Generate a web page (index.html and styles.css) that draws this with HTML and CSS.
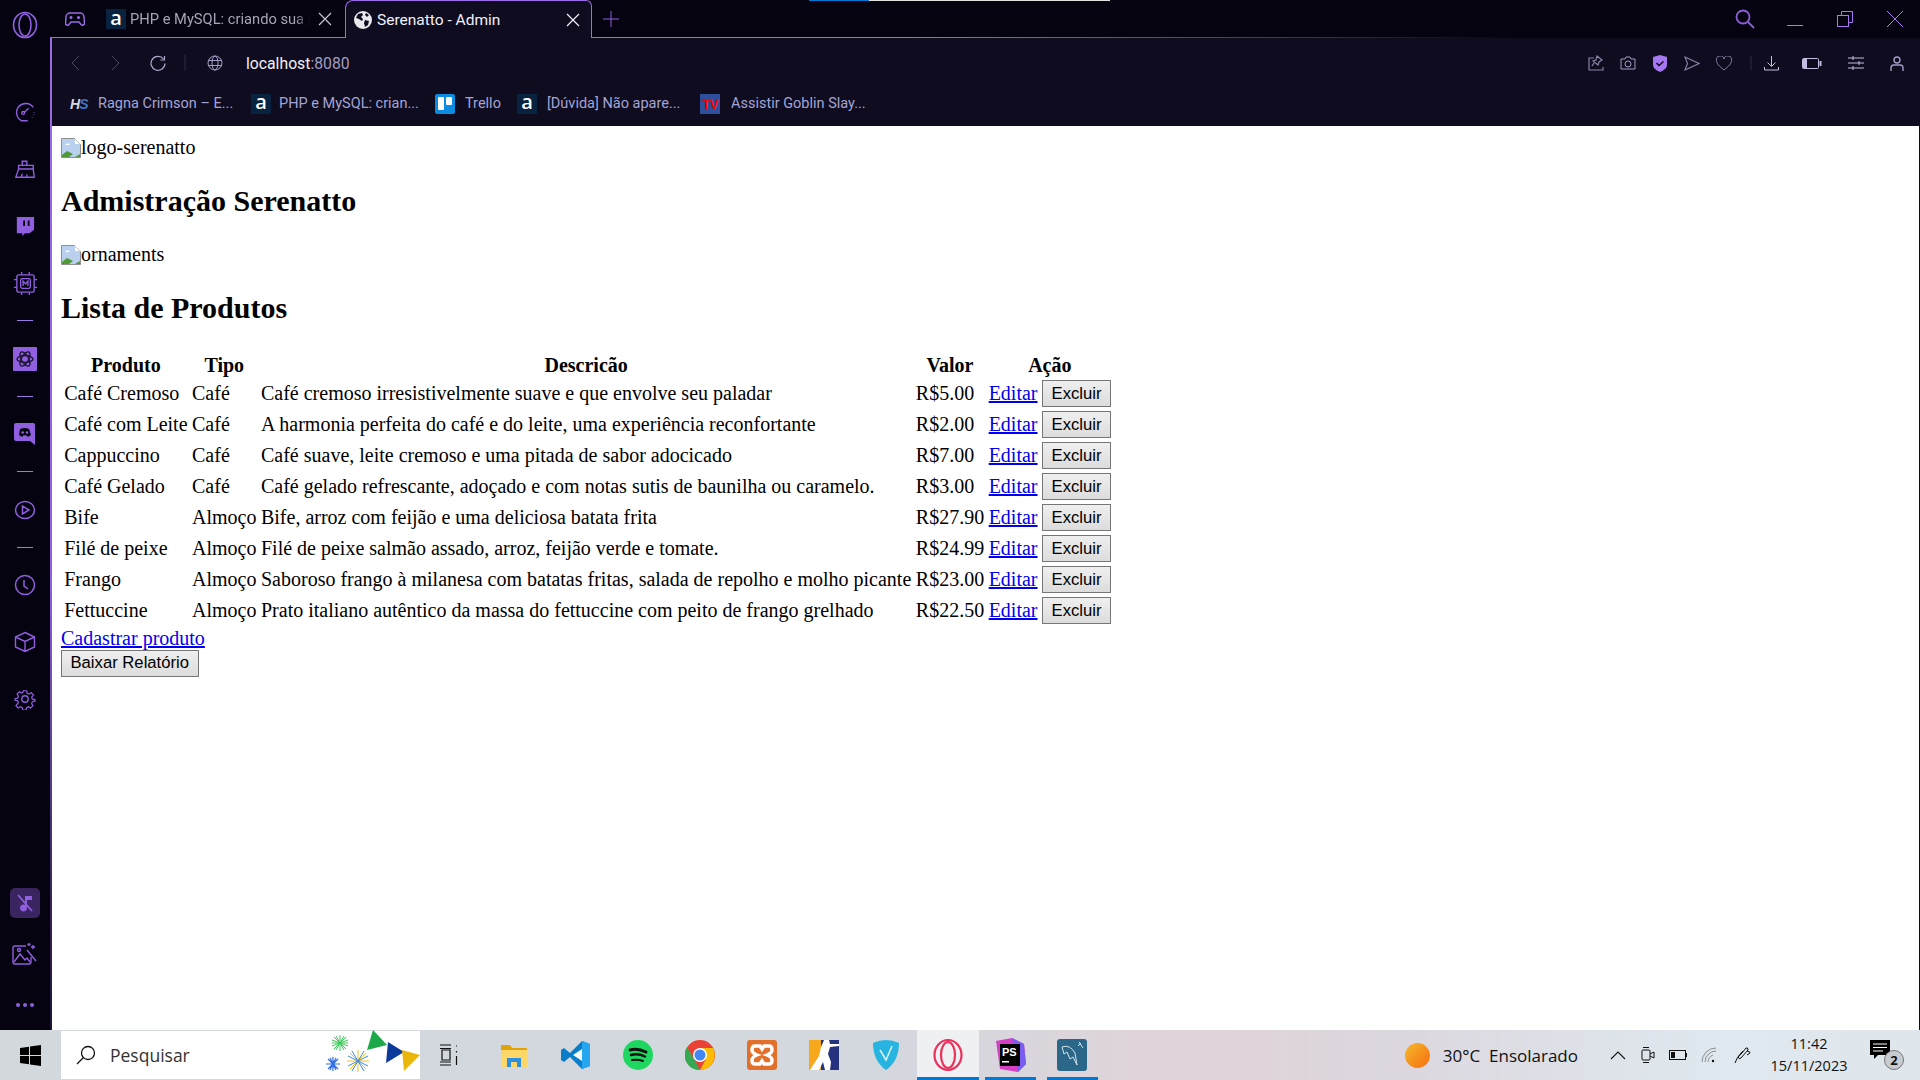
FILE: index.html
```html
<!DOCTYPE html>
<html lang="pt-BR">
<head>
<meta charset="utf-8">
<title>Serenatto - Admin</title>
<link rel="stylesheet" href="styles.css">
</head>
<body>
<div class="screen">
  <div class="capture-bar"><span class="capture-blue"></span><span class="capture-white"></span></div>
  <div class="window">
    <aside class="rail">
      <div class="rail-cell rail-logo"><svg width="26" height="30" viewBox="0 0 26 30" fill="none" stroke="currentColor" stroke-width="1.6"><ellipse cx="13" cy="15" rx="11.5" ry="12.5"/><ellipse cx="13" cy="15" rx="6" ry="11"/></svg></div>
      <div class="rail-cell"><svg width="22" height="22" viewBox="0 0 24 24" fill="none" stroke="currentColor" stroke-width="1.5"><path d="M21 7A10 10 0 1 0 8 21.5h7"/><path d="M22 12v.5M21.500 15v.5M20 18v.5"/><circle cx="10" cy="13" r="1.600"/><path d="M11.500 12 16 8"/></svg></div>
      <div class="rail-cell"><svg width="22" height="22" viewBox="0 0 24 24" fill="none" stroke="currentColor" stroke-width="1.500"><path d="M9 8V3.500h5V8M5 8h16v4l1 9H2l3-9zM5 12h16M8 21l1-4M14 21v-3"/></svg></div>
      <div class="rail-cell"><svg width="20" height="22" viewBox="0 0 22 24" fill="currentColor"><path fill-rule="evenodd" d="M2 2h19v14l-5 4h-5l-3 3v-3H2zM9 6v6h2V6zm5 0v6h2V6z"/></svg></div>
      <div class="rail-cell"><svg width="25" height="25" viewBox="0 0 26 26" fill="none" stroke="currentColor" stroke-width="1.400"><rect x="4" y="4" width="18" height="18" rx="2"/><rect x="8" y="8" width="10" height="10" rx="1.500"/><path d="M10.500 15.500v-5l2.500 3 2.500-3v5M9 1v3M17 1v3M9 22v3M17 22v3M1 9h3M1 17h3M22 9h3M22 17h3"/></svg></div>
      <div class="rail-sep"></div>
      <div class="rail-cell"><span class="rail-tile"><svg width="18" height="18" viewBox="0 0 18 18" fill="none" stroke="#1d1433" stroke-width="1.400"><ellipse cx="9" cy="9" rx="8" ry="3.500"/><ellipse cx="9" cy="9" rx="8" ry="3.500" transform="rotate(60 9 9)"/><ellipse cx="9" cy="9" rx="8" ry="3.500" transform="rotate(120 9 9)"/></svg></span></div>
      <div class="rail-sep"></div>
      <div class="rail-cell"><svg width="24" height="24" viewBox="0 0 24 24"><path fill="currentColor" d="M3 1h17a2 2 0 0 1 2 2v20l-5-4H3a2 2 0 0 1-2-2V3a2 2 0 0 1 2-2z"/><path fill="#05030f" d="M7 7q5-2 9 0l2 6q-2 2-4 1.500l-.6-1.300h-3L9.800 14.500Q8 15 6 13z"/><circle cx="9.700" cy="10.500" r="1.300" fill="currentColor"/><circle cx="14" cy="10.500" r="1.300" fill="currentColor"/></svg></div>
      <div class="rail-sep"></div>
      <div class="rail-cell"><svg width="22" height="20" viewBox="0 0 22 20" fill="none" stroke="currentColor" stroke-width="1.500"><ellipse cx="11" cy="10" rx="9.500" ry="8.500"/><path d="M8.500 6v8l6.500-4z"/></svg></div>
      <div class="rail-sep"></div>
      <div class="rail-cell"><svg width="22" height="22" viewBox="0 0 22 22" fill="none" stroke="currentColor" stroke-width="1.500"><circle cx="11" cy="11" r="9.500"/><path d="M10 6v6l4 3"/></svg></div>
      <div class="rail-cell"><svg width="22" height="22" viewBox="0 0 22 22" fill="none" stroke="currentColor" stroke-width="1.400"><path d="M11 1.500 20.500 6v10L11 20.500 1.500 16V6zM1.500 6 11 10.500 20.500 6M11 10.500v10"/></svg></div>
      <div class="rail-cell"><svg width="22" height="22" viewBox="0 0 24 24" fill="none" stroke="currentColor" stroke-width="1.500"><circle cx="12" cy="12" r="3.500"/><path d="M10 2h4l.6 3 2.300 1 2.600-1.600 2.800 2.800L20 9.800l1 2.300 3 .6v2l-3 .6-1 2.300 1.600 2.600-2.800 2.800-2.600-1.600-2.300 1-.6 3h-4l-.6-3-2.300-1-2.600 1.600-2.800-2.800L4 16.500l-1-2.300-3-.6v-2l3-.6 1-2.300-1.600-2.600L5.200 3.300l2.600 1.600 1.600-.9z" transform="translate(1.200 1.200) scale(.9)"/></svg></div>
      <div class="rail-bottom">
        <div class="rail-low"><span class="rail-tile-dim"><svg width="20" height="20" viewBox="0 0 20 20" fill="currentColor"><path d="M10 3h7v4h-5v8a3.500 3.500 0 1 1-2-3.200z"/><path d="M3 2l14 16" stroke="currentColor" stroke-width="1.800"/></svg></span></div>
        <div class="rail-low"><svg width="26" height="24" viewBox="0 0 26 24" fill="none" stroke="currentColor" stroke-width="1.400"><path d="M14 4H3a2 2 0 0 0-2 2v14a2 2 0 0 0 2 2h14a2 2 0 0 0 2-2v-5"/><path d="m2 20 6-8 5 6 2-2 3 4"/><circle cx="7" cy="8" r="1.500"/><path d="m15 8 9 11M21 3v4M19 5h4M17 1v3M15.500 2.500h3"/></svg></div>
        <div class="rail-low rail-dots"><i></i><i></i><i></i></div>
      </div>
    </aside>
    <div class="browser">
      <header class="tabbar">
        <span class="game"><svg width="20" height="16" viewBox="0 0 20 16" fill="none" stroke="currentColor" stroke-width="1.500"><path d="M5 2h10a4 4 0 0 1 4 4l.5 6a2 2 0 0 1-3.500 1.500L14 11H6l-2 2.500A2 2 0 0 1 .5 12L1 6a4 4 0 0 1 4-4z"/><path d="M6 5v3M4.500 6.500h3"/><circle cx="13.500" cy="6.500" r=".8"/></svg></span>
        <div class="tab">
          <span class="fav-a">a</span>
          <span class="tab-title tab-title-fade">PHP e MySQL: criando sua p</span>
          <svg class="tab-x" width="14" height="14" viewBox="0 0 14 14" stroke="currentColor" stroke-width="1.200"><path d="m1 1 12 12M13 1 1 13"/></svg>
        </div>
        <div class="tab tab-active">
          <svg width="18" height="18" viewBox="0 0 18 18"><circle cx="9" cy="9" r="9" fill="#e8e8ee"/><path fill="#0e0c1e" d="M4 3l4-1 1 2-2 2 2 2-1 2-3-2-3-1zM11 9l4 1-1 4-3 2-1-4zM12 2l3 2-2 2-2-2z"/></svg>
          <span class="tab-title tab-title-active">Serenatto - Admin</span>
          <svg class="tab-x" width="14" height="14" viewBox="0 0 14 14" stroke="currentColor" stroke-width="1.200"><path d="m1 1 12 12M13 1 1 13"/></svg>
        </div>
        <svg class="plus" width="16" height="16" viewBox="0 0 16 16" stroke="currentColor" stroke-width="1"><path d="M8 0v16M0 8h16"/></svg>
        <div class="win-controls">
          <svg width="20" height="20" viewBox="0 0 20 20" fill="none" stroke="#8b5fd8" stroke-width="1.800"><circle cx="8" cy="8" r="6.500"/><path d="m13 13 6 6"/></svg>
          <svg class="ctl-min" width="16" height="16" viewBox="0 0 16 16" stroke="currentColor" stroke-width="1"><path d="M0 14.500h16"/></svg>
          <svg width="16" height="16" viewBox="0 0 16 16" fill="none" stroke="currentColor" stroke-width="1"><rect x=".500" y="4.500" width="11" height="11"/><path d="M4.500 4.500v-4h11v11h-4"/></svg>
          <svg width="16" height="16" viewBox="0 0 16 16" stroke="currentColor" stroke-width="1"><path d="m0 0 16 16M16 0 0 16"/></svg>
        </div>
      </header>
      <div class="viewport">
        <nav class="toolbar">
          <svg class="nav-dim" width="10" height="16" viewBox="0 0 10 16" fill="none" stroke="currentColor"><path d="M9 1 2 8l7 7"/></svg>
          <svg class="nav-dim" width="10" height="16" viewBox="0 0 10 16" fill="none" stroke="currentColor"><path d="m1 1 7 7-7 7"/></svg>
          <svg class="nav-reload" width="16" height="16" viewBox="0 0 16 16" fill="none" stroke="currentColor" stroke-width="1.200"><path d="M13.500 4A7 7 0 1 0 15 8.500"/><path d="M14.500 1v4h-4"/></svg>
          <span class="nav-div"></span>
          <svg class="nav-globe" width="16" height="16" viewBox="0 0 16 16" fill="none" stroke="currentColor"><circle cx="8" cy="8" r="7"/><ellipse cx="8" cy="8" rx="3" ry="7"/><path d="M1 5.500h14M1 10.500h14"/></svg>
          <span class="url">localhost<span class="url-port">:8080</span></span>
          <div class="tools">
            <svg width="16" height="16" viewBox="0 0 16 16" fill="none" stroke="#8a82a8" stroke-width="1.200"><path d="M6 3H1v12h14v-3"/><path d="m9 1 5 4-3 2-1 3-5-4 3-1zM6 8l-2 3"/></svg>
            <svg width="16" height="14" viewBox="0 0 16 14" fill="none" stroke="#a49cc4" stroke-width="1"><path d="M1 3h4l1-2h4l1 2h4v10H1z"/><circle cx="8" cy="8" r="3"/></svg>
            <svg width="14" height="17" viewBox="0 0 14 17"><path fill="#a678f2" d="M7 0l7 2v8q0 4-7 7-7-3-7-7V2z"/><path fill="none" stroke="#100c20" stroke-width="1.500" d="m3.500 8 2.500 2.500 4.500-4"/></svg>
            <svg class="tool-send" width="16" height="15" viewBox="0 0 16 15" fill="none" stroke="#8a82a8" stroke-width="1.100"><path d="M1 1l14 6.500L1 14l2.500-6.500z"/></svg>
            <svg width="16" height="15" viewBox="0 0 16 15" fill="none" stroke="#8a82a8" stroke-width="1"><path d="M8 14C3 10 .5 7.500.5 4.500A3.800 3.800 0 0 1 8 3a3.800 3.800 0 0 1 7.500 1.500C15.500 7.500 13 10 8 14z"/></svg>
            <span class="tool-div"></span>
            <svg class="tool-dl" width="15" height="15" viewBox="0 0 15 15" fill="none" stroke="#c4bce0" stroke-width="1"><path d="M7.500 0v10M3.500 6.500l4 4 4-4M.500 11v3h14v-3"/></svg>
            <svg class="tool-bat" width="20" height="11" viewBox="0 0 20 11"><rect x=".500" y=".500" width="16" height="10" rx="1" fill="none" stroke="#c4bce0"/><rect x="1" y="1" width="4" height="9" fill="#c4bce0"/><rect x="17.500" y="3" width="2" height="5" fill="#c4bce0"/></svg>
            <svg class="tool-sl" width="16" height="14" viewBox="0 0 16 14" stroke="#c4bce0" stroke-width="1"><path d="M0 2h16M0 7h16M0 12h16M5 0v4M11 5v4M5 10v4"/></svg>
            <svg class="tool-user" width="14" height="15" viewBox="0 0 14 15" fill="none" stroke="#a49cc4" stroke-width="1.400"><circle cx="7" cy="4" r="3"/><path d="M1 15v-3q0-3 3-3h6q3 0 3 3v3"/></svg>
          </div>
        </nav>
        <div class="bookmarks">
          <div class="bm bm-hs"><span class="fav-hs">H<span class="fav-hs-s">S</span></span><span class="bm-text">Ragna Crimson – E...</span></div>
          <div class="bm bm-php"><span class="fav-a">a</span><span class="bm-text">PHP e MySQL: crian...</span></div>
          <div class="bm bm-trello"><svg width="20" height="20" viewBox="0 0 20 20"><rect width="20" height="20" rx="2" fill="#0c8ce0"/><rect x="3" y="3" width="6" height="13" rx="1" fill="#fff"/><rect x="11" y="3" width="6" height="8" rx="1" fill="#fff"/></svg><span class="bm-text">Trello</span></div>
          <div class="bm bm-duv"><span class="fav-a">a</span><span class="bm-text">[Dúvida] Não apare...</span></div>
          <div class="bm bm-tv"><span class="fav-tv">TV</span><span class="bm-text">Assistir Goblin Slay...</span></div>
        </div>
        <main class="page">
          <div class="alt-line"><svg class="broken" width="20" height="20" viewBox="0 0 20 20"><path fill="#b9d0ee" stroke="#8f8f8f" d="M.5.5h13l6 6v13H.5z"/><path fill="#fff" d="M4 7q2.500-3.500 5 0zM14 1v5h5z"/><path fill="#4f9a36" d="M1 19v-2l5-4 6 3-4 3zM14 19l5-3v3z"/></svg>logo-serenatto</div>
          <h1 class="heading">Admistração Serenatto</h1>
          <div class="alt-line"><svg class="broken" width="20" height="20" viewBox="0 0 20 20"><path fill="#b9d0ee" stroke="#8f8f8f" d="M.5.5h13l6 6v13H.5z"/><path fill="#fff" d="M4 7q2.500-3.500 5 0zM14 1v5h5z"/><path fill="#4f9a36" d="M1 19v-2l5-4 6 3-4 3zM14 19l5-3v3z"/></svg>ornaments</div>
          <h2 class="heading">Lista de Produtos</h2>
          <table class="products">
            <thead><tr><th>Produto</th><th>Tipo</th><th>Descricão</th><th>Valor</th><th colspan="2">Ação</th></tr></thead>
            <tbody>
              <tr><td>Café Cremoso</td><td>Café</td><td>Café cremoso irresistivelmente suave e que envolve seu paladar</td><td>R$5.00</td><td><a href="#">Editar</a></td><td><button class="btn" type="button">Excluir</button></td></tr>
              <tr><td>Café com Leite</td><td>Café</td><td>A harmonia perfeita do café e do leite, uma experiência reconfortante</td><td>R$2.00</td><td><a href="#">Editar</a></td><td><button class="btn" type="button">Excluir</button></td></tr>
              <tr><td>Cappuccino</td><td>Café</td><td>Café suave, leite cremoso e uma pitada de sabor adocicado</td><td>R$7.00</td><td><a href="#">Editar</a></td><td><button class="btn" type="button">Excluir</button></td></tr>
              <tr><td>Café Gelado</td><td>Café</td><td>Café gelado refrescante, adoçado e com notas sutis de baunilha ou caramelo.</td><td>R$3.00</td><td><a href="#">Editar</a></td><td><button class="btn" type="button">Excluir</button></td></tr>
              <tr><td>Bife</td><td>Almoço</td><td>Bife, arroz com feijão e uma deliciosa batata frita</td><td>R$27.90</td><td><a href="#">Editar</a></td><td><button class="btn" type="button">Excluir</button></td></tr>
              <tr><td>Filé de peixe</td><td>Almoço</td><td>Filé de peixe salmão assado, arroz, feijão verde e tomate.</td><td>R$24.99</td><td><a href="#">Editar</a></td><td><button class="btn" type="button">Excluir</button></td></tr>
              <tr><td>Frango</td><td>Almoço</td><td>Saboroso frango à milanesa com batatas fritas, salada de repolho e molho picante</td><td>R$23.00</td><td><a href="#">Editar</a></td><td><button class="btn" type="button">Excluir</button></td></tr>
              <tr><td>Fettuccine</td><td>Almoço</td><td>Prato italiano autêntico da massa do fettuccine com peito de frango grelhado</td><td>R$22.50</td><td><a href="#">Editar</a></td><td><button class="btn" type="button">Excluir</button></td></tr>
            </tbody>
          </table>
          <a href="#">Cadastrar produto</a>
          <div><button class="btn" type="button">Baixar Relatório</button></div>
        </main>
      </div>
    </div>
  </div>
  <footer class="taskbar">
    <span class="start"><svg width="21" height="21" viewBox="0 0 21 21" fill="#000"><path d="M0 3l9-1.300V10H0zM10 1.500 21 0v10H10zM0 11h9v8.300L0 18zM10 11h11v10l-11-1.500z"/></svg></span>
    <div class="search">
      <svg width="20" height="20" viewBox="0 0 20 20" fill="none" stroke="#111" stroke-width="1.300"><circle cx="12" cy="8" r="6.500"/><path d="M7.500 12.500 1 19"/></svg>
      <span class="search-text">Pesquisar</span>
      <svg class="festive" width="96" height="50" viewBox="0 0 96 50" fill="none">
        <g stroke="#3ec85a" stroke-width="1"><path d="M16 5v16M8 13h16M10 7l12 12M22 7 10 19M12 6l8 14M20 6l-8 14M8 10l16 6M24 10 8 16"/></g>
        <g stroke="#2f6fe8" stroke-width="1.200"><path d="M9 27v14M2 34h14M4 29l10 10M14 29 4 39M6 28l6 12M12 28l-6 12"/></g>
        <g stroke="#f0c020" stroke-width="1"><path d="M34 20v22M23 31h22M26 23l16 16M42 23 26 39"/></g>
        <g stroke="#3a8be0" stroke-width="1"><path d="M28 21l12 20M40 21 28 41M24 26l20 10M44 26 24 36"/></g>
        <path fill="#1da84a" d="M49 0 63 15 43 20z"/>
        <path fill="#0c3a9a" d="M64 12 80 22 62 33z"/>
        <path fill="#eab60a" d="M78 20 96 25 80 41z"/>
      </svg>
    </div>
    <div class="task-icons">
      <span class="task-icon task-view"><svg width="20" height="22" viewBox="0 0 20 22" fill="none" stroke="#111" stroke-width="1.200"><path d="M1 1h11M1 21h11M1 4.500h11M3 6h8v10H3zM1 18h11M17 2h1M17.500 7v1.500M17.500 12v9"/></svg></span>
      <span class="task-icon"><svg width="26" height="24" viewBox="0 0 26 24"><path fill="#e0a10c" d="M0 2h9l2 3h15v5H0z"/><path fill="#fdd868" d="M0 7h26v17H0z"/><path fill="#2d8fe0" d="M6 24v-9h14v9h-4v-5h-6v5z"/></svg></span>
      <span class="task-icon"><svg width="30" height="30" viewBox="0 0 30 30"><path fill="#0a7dc8" d="M21 1 9 13 3 8 0 10v10l3 2 6-5 12 12 8-3V4z"/><path fill="#24a6f0" d="M21 1l8 3v22l-8 3z"/><path fill="#f4fbff" d="M21 9l-9 6 9 6z"/></svg></span>
      <span class="task-icon"><svg width="30" height="30" viewBox="0 0 30 30" fill="none"><circle cx="15" cy="15" r="15" fill="#1ed760"/><path stroke="#111" stroke-width="3" stroke-linecap="round" d="M7 10q8-2 16 2"/><path stroke="#111" stroke-width="2.500" stroke-linecap="round" d="M8 15q7-2 14 1.500"/><path stroke="#111" stroke-width="2" stroke-linecap="round" d="M9 20q6-1 11 1"/></svg></span>
      <span class="task-icon"><svg width="30" height="30" viewBox="0 0 30 30"><circle cx="15" cy="15" r="15" fill="#ea4335"/><path fill="#fbbc05" d="M15 8h13a15 15 0 0 1-13 22l6-11z"/><path fill="#34a853" d="M2 7l7 12 6 11A15 15 0 0 1 2 7z"/><circle cx="15" cy="15" r="7" fill="#fff"/><circle cx="15" cy="15" r="5.500" fill="#4285f4"/></svg></span>
      <span class="task-icon"><svg width="30" height="30" viewBox="0 0 30 30"><rect width="30" height="30" rx="3" fill="#e2702a"/><path fill="none" stroke="#fff" stroke-width="3.500" d="M8 6h5l2 3 2-3h5q3 0 3 4 0 3-5 5 5 2 5 5 0 4-3 4h-5l-2-3-2 3H8q-3 0-3-4 0-3 5-5-5-2-5-5 0-4 3-4z"/></svg></span>
      <span class="task-icon"><svg width="30" height="30" viewBox="0 0 30 30"><rect width="30" height="30" fill="#24327f"/><path fill="#f8a81c" d="M0 0h12v30H0z"/><path fill="#fff" d="M15 0h5l1 4 9 0v2l-9 1-2 7 3 8-1 8h-5l-2-8-4 8H1l9-14 2-9z"/></svg></span>
      <span class="task-icon"><svg width="26" height="30" viewBox="0 0 26 30"><path fill="#27b4e0" d="M0 3q13-6 26 0 0 18-13 27Q0 21 0 3z"/><path fill="none" stroke="#d9f3fb" stroke-width="1.500" d="M7 10l6 10 6-14"/></svg></span>
      <span class="task-icon task-open task-active"><svg width="30" height="34" viewBox="0 0 30 34" fill="none" stroke="#e9315c" stroke-width="2.200"><ellipse cx="15" cy="17" rx="13.500" ry="15"/><ellipse cx="15" cy="17" rx="7" ry="13"/></svg></span>
      <span class="task-icon task-open"><svg width="32" height="34" viewBox="0 0 32 34"><path fill="#d43fc4" d="M2 3l16-3 12 6 2 20-8 8-18-3z"/><path fill="#7a5cf0" d="M18 0l12 6 2 20-8 8z"/><rect x="6" y="6" width="20" height="22" fill="#000"/><text class="ps-text" x="8" y="18">PS</text><rect x="8" y="23" width="7" height="1.500" fill="#fff"/></svg></span>
      <span class="task-icon task-open"><svg width="30" height="32" viewBox="0 0 30 32"><rect width="30" height="32" rx="3" fill="#2a6789"/><path fill="none" stroke="#d5e3ea" stroke-width="1" d="M5 8q8-3 13 6l2 12-4-8-3 2-3-7-3 2zM22 3l4 6M24 4l-3 3"/></svg></span>
    </div>
    <div class="tray">
      <span class="sun"></span>
      <span class="weather">30°C&nbsp;&nbsp;Ensolarado</span>
      <svg class="tray-chev" width="16" height="9" viewBox="0 0 16 9" fill="none" stroke="#111" stroke-width="1.100"><path d="m1 8 7-7 7 7"/></svg>
      <svg class="tray-ic" width="14" height="18" viewBox="0 0 14 18" fill="none" stroke="#111"><rect x="1" y="4" width="8" height="10" rx="1"/><path d="m9 8 4-2v6l-4-2M2 1.500h6M2 16.500h6"/></svg>
      <svg class="tray-ic" width="18" height="10" viewBox="0 0 18 10"><rect x=".500" y=".500" width="16" height="9" fill="none" stroke="#111"/><rect x="2" y="2" width="4" height="6" fill="#111"/><rect x="17" y="3" width="1" height="4" fill="#111"/></svg>
      <svg class="tray-ic tray-wifi" width="16" height="16" viewBox="0 0 16 16" fill="none" stroke="#8a8f94"><path d="M1 15A14 14 0 0 1 15 1M4 15A11 11 0 0 1 15 4M7 15a8 8 0 0 1 5-7"/><circle cx="12" cy="14" r="1.200" fill="#111" stroke="none"/></svg>
      <svg class="tray-ic tray-pen" width="18" height="18" viewBox="0 0 18 18" fill="none" stroke="#111"><path d="M1 17q1-5 7-10l4-5q2-1 2 2l-7 8q-2 2-3-1 1-2 5-6M13 5q3 0 3 2l-3 2"/></svg>
      <div class="clock"><span>11:42</span><span>15/11/2023</span></div>
      <div class="notif"><svg width="20" height="20" viewBox="0 0 20 20"><path fill="#000" d="M0 0h20v15H8l-4 4v-4H0z"/><path stroke="#fff" d="M3 4h14M3 7.500h14M3 11h10"/></svg><span class="notif-badge">2</span></div>
    </div>
  </footer>
</div>
</body>
</html>
```
FILE: styles.css
```css
* { box-sizing: border-box; }
html, body { margin: 0; height: 100%; overflow: hidden; }
.screen { width: 1920px; height: 1080px; display: flex; flex-direction: column; position: relative; }
.capture-bar { position: absolute; left: 809px; top: 0; width: 301px; height: 1px; display: flex; z-index: 5; }
.capture-blue { width: 60px; background: #0078d4; }
.capture-white { flex: 1; background: #e0e0e0; }
.window { flex: 1; min-height: 0; display: flex; background: #05030f; }

.rail { width: 50px; flex: none; display: flex; flex-direction: column; align-items: center; gap: 19px; padding-top: 6px; padding-bottom: 9px; color: #8f5fe0; }
.rail-cell { height: 38px; width: 100%; display: flex; align-items: center; justify-content: center; }
.rail-logo { margin-bottom: 30px; }
.rail-sep { width: 16px; height: 1px; background: #9a7ae0; margin: -0.750px 0 -0.750px -1px; }
.rail-tile { width: 24px; height: 24px; background: #8f5fe0; border-radius: 1px; display: flex; align-items: center; justify-content: center; }
.rail-bottom { margin-top: auto; display: flex; flex-direction: column; gap: 19px; }
.rail-low { height: 32px; display: flex; align-items: center; justify-content: center; }
.rail-tile-dim { width: 30px; height: 30px; background: #3a2560; border-radius: 5px; color: #8f5fe0; display: flex; align-items: center; justify-content: center; }
.rail-dots { gap: 3px; }
.rail-dots i { width: 4px; height: 4px; border-radius: 50%; background: #8f5fe0; }

.browser { flex: 1; min-width: 0; display: flex; flex-direction: column; }
.tabbar { height: 38px; flex: none; display: flex; align-items: center; position: relative; font: 14.700px "Roboto", "Open Sans", sans-serif; color: #b0a8cc; }
.tabbar::after { content: ""; position: absolute; left: 0; right: 0; bottom: 0; height: 1px; background: linear-gradient(90deg, #9a6ae8 0, #9a6ae8 45%, #3a2a60 68%, transparent 78%); }
.game { width: 46px; margin-left: 2px; display: flex; justify-content: center; color: #9a6ae8; }
.tab { height: 38px; display: flex; align-items: center; gap: 4px; flex: none; }
.tab:not(.tab-active) { width: 248px; padding-left: 8px; }
.tab-title { flex: 1; overflow: hidden; white-space: nowrap; color: #a8a4b8; }
.tab-title-fade { -webkit-mask-image: linear-gradient(90deg, #000 92%, transparent 100%); mask-image: linear-gradient(90deg, #000 92%, transparent 100%); margin-right: 4px; }
.tab-title-active { color: #f2f0fa; font-size: 15.500px; margin-left: 1px; }
.tab-x { color: #c8c4d4; margin-right: 14px; flex: none; }
.tab-active { width: 247px; padding-left: 8px; position: relative; z-index: 1; background: #0e0c1e; border: 1px solid #9a6ae8; border-bottom: 0; border-radius: 8px 6px 0 0; margin-left: -1px; color: #f2f0fa; }
.tab-active .tab-x { color: #f2f0fa; margin-right: 11px; }
.plus { color: #8f5fe0; margin-left: 11px; }
.win-controls { margin-left: auto; display: flex; align-items: center; gap: 34px; padding-right: 17px; color: #a678f2; }
.ctl-min { margin-left: -1.500px; }

.viewport { flex: 1; min-height: 0; display: flex; flex-direction: column; position: relative; background: #0e0c1e; }
.viewport::before { content: ""; position: absolute; left: 0; top: 0; bottom: 0; width: 1.500px; background: linear-gradient(180deg, #9a6ae8 0, #8f5fe0 55%, #3a2a60 85%, #1d1433 100%); z-index: 2; }
.toolbar { height: 50px; flex: none; display: flex; align-items: center; padding-left: 20px; font: 15.750px "Roboto", "Open Sans", sans-serif; }
.nav-dim { color: #4a4660; margin-right: 31px; }
.nav-reload { color: #b0a8cc; margin-left: -2px; }
.nav-div { width: 2px; height: 16px; margin: 0 21px 0 18px; background: #1d1a34; }
.nav-globe { color: #a49cc4; }
.url { margin-left: 23px; color: #f2f0fa; }
.url-port { color: #a49cc4; }
.tools { margin-left: auto; display: flex; align-items: center; gap: 16.500px; padding-right: 16px; }
.tool-send { margin-left: 1px; margin-right: -1px; }
.tool-div { width: 2px; height: 14px; background: #1d1a34; margin-left: 2px; margin-right: -2px; }
.tool-dl { margin-left: -2.500px; }
.tool-bat { margin-left: 6px; }
.tool-sl { margin-left: 9.500px; }
.tool-user { margin-left: 10px; }

.bookmarks { height: 38px; flex: none; display: flex; align-items: center; padding: 0 0 7px 18px; font: 14.500px "Roboto", "Open Sans", sans-serif; color: #a4a4d8; }
.bm { display: flex; align-items: center; flex: none; }
.bm-text { white-space: nowrap; }
.bm-hs { width: 183px; gap: 8px; }
.bm-php { width: 184px; gap: 8px; }
.bm-trello { width: 82px; gap: 10px; }
.bm-duv { width: 183px; gap: 10px; }
.bm-tv { gap: 11px; }
.fav-a { width: 20px; height: 20px; flex: none; display: flex; align-items: center; justify-content: center; background: #08233f; color: #fff; font: 600 20px/1 "Open Sans", sans-serif; padding-bottom: 3px; }
.fav-hs { width: 20px; margin-left: 2px; font: italic bold 14px "Liberation Sans", sans-serif; color: #d8d8e0; letter-spacing: -1px; }
.fav-hs-s { color: #3a76c8; }
.fav-tv { width: 20px; height: 20px; display: flex; align-items: center; justify-content: center; background: #2e4f9c; color: #f00; font: bold 14px "Liberation Sans", sans-serif; letter-spacing: -1px; }

.page { flex: 1; min-height: 0; background: #fff; padding: 10px; margin-right: 1px; margin-left: 1px; font: 20px "Liberation Serif", "Times New Roman", serif; color: #000; overflow: hidden; }
.alt-line { line-height: 23px; display: flex; align-items: center; }
.broken { flex: none; }
.heading { font-size: 30px; line-height: 34.500px; font-weight: bold; margin: 24.900px 0; }
.products { border-spacing: 2.500px; border-collapse: separate; font-size: 20px; }
.products th, .products td { padding: 1.250px; }
.products td { text-align: left; }
.products th { text-align: center; padding-bottom: 0.250px; }
a { color: #00e; }
.btn { font: 16.670px "Liberation Sans", Arial, sans-serif; color: #000; padding: 2.250px 8.500px; border: 1px solid #767676; background: linear-gradient(#efefef, #dcdcdc); border-radius: 0; }

.taskbar { height: 50px; flex: none; display: flex; align-items: stretch; background: linear-gradient(90deg, #d2d8dc 0, #d2d8de 45%, #e1d3da 62%, #dcd6de 72%, #dfe9ef 90%, #dfe6ec 100%); font: 17px "Open Sans", "Noto Sans", sans-serif; color: #111; }
.start { width: 61px; flex: none; display: flex; align-items: center; justify-content: center; }
.search { width: 359px; flex: none; margin: 1px 0; background: #fff; display: flex; align-items: center; padding-left: 15px; gap: 14px; position: relative; }
.search-text { color: #333; font-size: 17.500px; }
.festive { position: absolute; right: 0; top: -1px; overflow: visible; }
.task-icons { display: flex; margin-left: 1px; }
.task-icon { width: 62px; flex: none; display: flex; align-items: center; justify-content: center; position: relative; }
.task-view svg { margin-left: -6px; }
.task-open::after { content: ""; position: absolute; left: 6px; right: 5px; bottom: 0; height: 3px; background: #0078d4; }
.task-active { background: #eff0f2; }
.task-active::after { left: 0; right: 0; }
.ps-text { font: bold 11px "Liberation Sans", sans-serif; fill: #fff; }
.tray { margin-left: auto; display: flex; align-items: center; padding-right: 10px; }
.sun { width: 25px; height: 25px; border-radius: 50%; background: linear-gradient(135deg, #f5b82e, #f56f10); margin-right: 13px; }
.weather { white-space: nowrap; margin-right: 32px; }
.tray-chev { margin-right: 15px; }
.tray-ic { margin-right: 14px; }
.tray-wifi { margin-right: 17px; }
.tray-pen { margin-right: 7px; }
.clock { display: flex; flex-direction: column; align-items: center; font-size: 14.500px; line-height: 22px; width: 88px; margin-left: 6px; }
.notif { position: relative; width: 40px; margin-left: 17px; height: 30px; display: flex; align-items: flex-start; }
.notif-badge { position: absolute; left: 14px; top: 10px; width: 20px; height: 20px; border-radius: 50%; background: #c8ccd0; border: 1px solid #777; font: bold 13px/18px "Open Sans", sans-serif; text-align: center; }
```
